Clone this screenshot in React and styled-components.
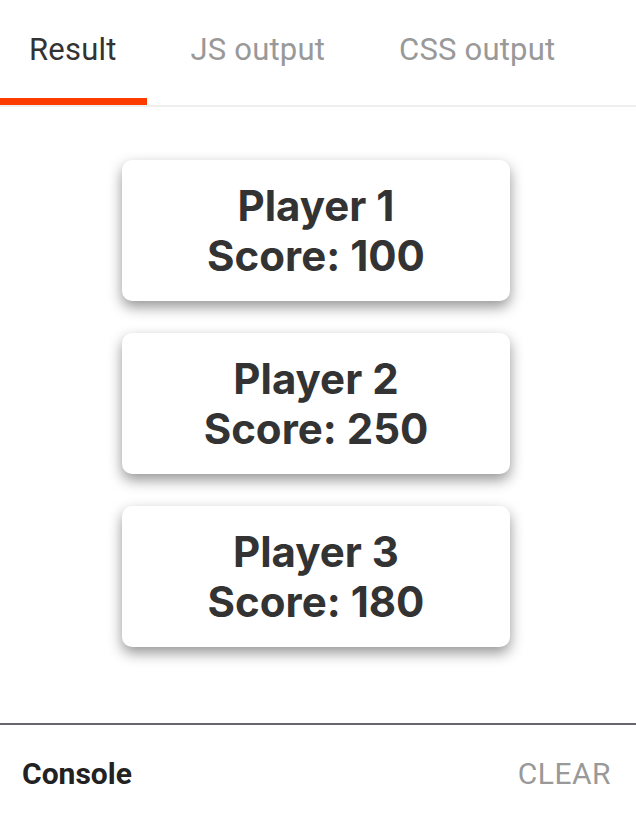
import React from "react";
import styled, { createGlobalStyle } from "styled-components";

const players = [
  { name: "Player 1", score: 100 },
  { name: "Player 2", score: 250 },
  { name: "Player 3", score: 180 },
];

const tabs = ["Result", "JS output", "CSS output"];

function App() {
  return (
    <>
      <GlobalStyle />
      <Page>
        <TabBar>
          {tabs.map((t, i) => (
            <Tab key={t} $active={i === 0}>
              {t}
            </Tab>
          ))}
        </TabBar>
        <Main>
          {players.map((p) => (
            <Card key={p.name}>
              <CardLine>{p.name}</CardLine>
              <CardLine>Score: {p.score}</CardLine>
            </Card>
          ))}
        </Main>
        <Console>
          <ConsoleTitle>Console</ConsoleTitle>
          <ClearButton>CLEAR</ClearButton>
        </Console>
      </Page>
    </>
  );
}

export default App;

const GlobalStyle = createGlobalStyle`
  html, body {
    margin: 0;
    padding: 0;
    background: #fff;
  }
  body {
    font-family: Roboto, "Liberation Sans", sans-serif;
  }
`;

const Page = styled.div`
  height: 100vh;
  display: flex;
  flex-direction: column;
`;

const TabBar = styled.div`
  display: flex;
  gap: 15px;
  height: 105px;
  border-bottom: 2px solid #eeeeee;
`;

const Tab = styled.div`
  position: relative;
  display: flex;
  align-items: center;
  padding: 0 30px 6px 29px;
  font-size: 31px;
  letter-spacing: 0.2px;
  color: ${(p) => (p.$active ? "#333" : "#999")};

  &::after {
    content: "";
    position: absolute;
    left: 0;
    right: 0;
    bottom: 0;
    height: 7px;
    background: ${(p) => (p.$active ? "#ff3c00" : "transparent")};
  }
`;

const Main = styled.div`
  flex: 1;
  display: flex;
  flex-direction: column;
  align-items: center;
  gap: 32px;
  padding: 53px 4px 0 0;
`;

const Card = styled.div`
  width: 388px;
  height: 141px;
  box-sizing: border-box;
  display: flex;
  flex-direction: column;
  justify-content: center;
  align-items: center;
  background: #fff;
  border-radius: 10px;
  box-shadow: 0 6px 14px rgba(0, 0, 0, 0.42);
  font-family: Inter, "Liberation Sans", sans-serif;
  font-weight: 700;
  font-size: 42px;
  line-height: 50px;
  color: #333;
`;

const CardLine = styled.div``;

const Console = styled.div`
  height: 107px;
  box-sizing: border-box;
  border-top: 2px solid #67666e;
  display: flex;
  align-items: center;
  justify-content: space-between;
  padding: 0 25px 9px 22px;
`;

const ConsoleTitle = styled.div`
  font-size: 30px;
  font-weight: 700;
  color: #222;
`;

const ClearButton = styled.div`
  font-size: 30px;
  color: #999;
  letter-spacing: 0.5px;
`;
